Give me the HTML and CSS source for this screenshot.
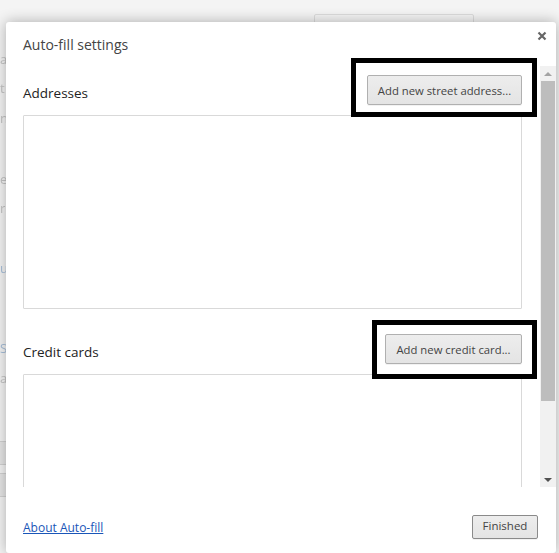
FILE: index.html
```html
<!DOCTYPE html>
<html lang="en">
<head>
<meta charset="utf-8">
<title>Auto-fill settings</title>
<link rel="stylesheet" href="styles.css">
</head>
<body>
<div class="backdrop">
  <div class="bg-tab"></div>
  <span class="bg-frag f1">a</span>
  <span class="bg-frag f2">t</span>
  <span class="bg-frag f3">n</span>
  <span class="bg-frag f4">e</span>
  <span class="bg-frag f5">r</span>
  <span class="bg-frag f6">u</span>
  <span class="bg-frag f7">S</span>
  <span class="bg-frag f8">a</span>
  <div class="bg-band b1"></div>
  <div class="bg-band b2"></div>
</div>
<section class="dialog">
  <button class="close" aria-label="Close">
    <svg viewBox="0 0 10 10" width="10" height="10"><path d="M1.5 1.5l7 7M8.5 1.5l-7 7" stroke="#666" stroke-width="2.2" fill="none"/></svg>
  </button>
  <h1 class="title">Auto-fill settings</h1>
  <div class="body">
    <div class="content">
      <div class="row">
        <h2 class="label">Addresses</h2>
        <div class="marked marked-address"><button class="btn btn-address">Add new street address...</button></div>
      </div>
      <div class="list"></div>
      <div class="row row-cards">
        <h2 class="label">Credit cards</h2>
        <div class="marked marked-card"><button class="btn btn-card">Add new credit card...</button></div>
      </div>
      <div class="list"></div>
    </div>
    <div class="scrollbar">
      <div class="arrow up"></div>
      <div class="track"><div class="thumb"></div></div>
      <div class="arrow down"></div>
    </div>
  </div>
  <footer class="footer">
    <a class="link" href="#">About Auto-fill</a>
    <button class="btn btn-finished">Finished</button>
  </footer>
</section>
</body>
</html>
```
FILE: styles.css
```css
html, body {
  margin: 0;
  height: 553px;
  overflow: hidden;
  background: #fff;
  font-family: "Open Sans", "Noto Sans", sans-serif;
  color: #333;
}
.backdrop {
  position: absolute;
  inset: 0;
  background: #f4f4f4;
  overflow: hidden;
}
.bg-tab {
  position: absolute;
  left: 314px;
  top: 14px;
  width: 158px;
  height: 20px;
  border: 1px solid #dcdcdc;
  border-radius: 2px;
}
.bg-frag {
  position: absolute;
  left: 0;
  font-size: 13px;
  line-height: 18px;
  color: #c4c4c4;
  filter: blur(.4px);
}
.f1 { top: 50px; }
.f2 { top: 79px; }
.f3 { top: 109px; }
.f4 { top: 170px; }
.f5 { top: 199px; }
.f6 { top: 259px; color: #a9c0da; }
.f7 { top: 339px; color: #a9c0da; }
.f8 { top: 369px; }
.bg-band {
  position: absolute;
  left: 0;
  width: 6px;
  background: #e6e6e6;
  border-top: 1px solid #d2d2d2;
  border-bottom: 1px solid #d2d2d2;
}
.b1 { top: 441px; height: 22px; }
.b2 { top: 473px; height: 22px; }
.dialog {
  position: absolute;
  left: 6px;
  top: 22px;
  width: 550px;
  height: 531px;
  display: flex;
  flex-direction: column;
  background: #fff;
  border-radius: 3px;
  box-shadow: 0 0 14px rgba(0, 0, 0, .3);
  overflow: hidden;
}
.close {
  position: absolute;
  right: 9px;
  top: 9px;
  width: 10px;
  height: 10px;
  padding: 0;
  border: 0;
  background: none;
  display: flex;
}
.title {
  margin: 0;
  height: 40px;
  padding: 14px 0 0 17px;
  box-sizing: border-box;
  font-size: 14px;
  line-height: 18px;
  font-weight: 400;
  color: #444;
}
.body {
  height: 425px;
  display: flex;
  clip-path: inset(-20px 0 0 0);
}
.content {
  flex: 1;
  min-width: 0;
  padding: 13px 18px 0 17px;
}
.row {
  display: flex;
  justify-content: space-between;
  align-items: flex-end;
  height: 40px;
  padding-bottom: 10px;
  box-sizing: border-box;
}
.row-cards {
  margin-top: 25px;
}
.label {
  margin: 0 0 3px;
  font-size: 13.5px;
  line-height: 18px;
  font-weight: 400;
  color: #222;
}
.marked { position: relative; display: flex; }
.marked::after {
  content: "";
  position: absolute;
  border: 5px solid #000;
  pointer-events: none;
}
.marked-address::after { left: -16px; right: -15px; top: -17px; bottom: -12px; }
.marked-card::after { left: -13px; right: -15px; top: -14px; bottom: -15px; }
.btn {
  height: 30px;
  padding: 1px 0 0;
  box-sizing: border-box;
  border: 1px solid #b0b0b0;
  border-radius: 2px;
  background: linear-gradient(#ededed, #e4e4e4);
  box-shadow: 0 1px 0 rgba(0, 0, 0, .05);
  font: 11.3px/1 "Open Sans", "Noto Sans", sans-serif;
  color: #444;
}
.btn-address { width: 155px; }
.btn-card { width: 137px; }
.btn-finished {
  width: 66px;
  height: 24px;
  padding: 0 0 2px;
  font-size: 11.5px;
  border-color: #8a8a8a;
  color: #444;
}
.list {
  border: 1px solid #d9d9d9;
  box-sizing: border-box;
  height: 194px;
  background: #fff;
  border-radius: 1px;
}
.scrollbar {
  width: 16px;
  display: flex;
  flex-direction: column;
  background: #f1f1f1;
  margin-top: 4px;
}
.arrow {
  height: 15px;
  display: flex;
  align-items: center;
  justify-content: center;
}
.arrow::before {
  content: "";
  border-left: 4px solid transparent;
  border-right: 4px solid transparent;
}
.up::before { border-bottom: 4px solid #a3a3a3; }
.down::before { border-top: 4px solid #505050; }
.track { flex: 1; padding: 0 1px; }
.thumb { height: 320px; background: #bdbdbd; }
.footer {
  flex: 1;
  display: flex;
  justify-content: space-between;
  align-items: flex-start;
  padding: 28px 18px 0 17px;
}
.link {
  font-size: 12px;
  line-height: 26px;
  color: #1a56b8;
  text-decoration: underline;
}
```
